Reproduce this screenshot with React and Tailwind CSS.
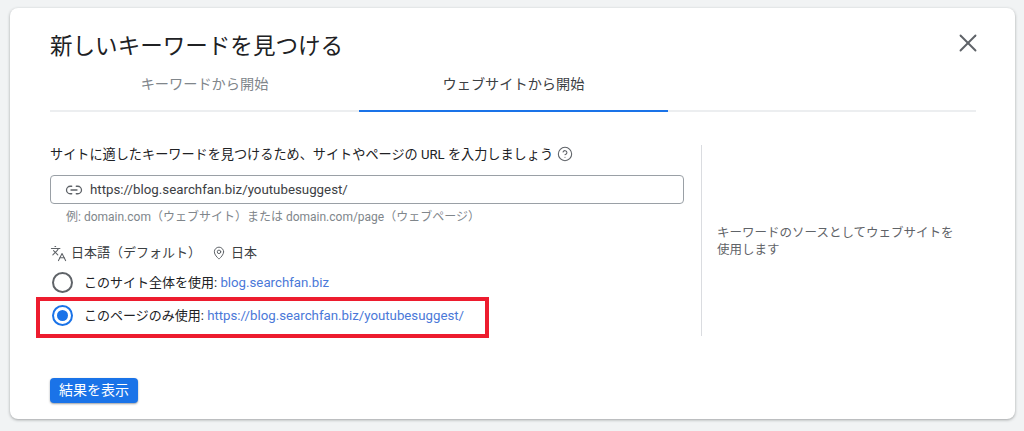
import { X, Link2, MapPin, Languages, CircleHelp } from 'lucide-react';

const font = { fontFamily: '"Roboto", "Noto Sans CJK JP", sans-serif' };

function Radio({ checked }) {
  return (
    <span className={`flex h-[21px] w-[21px] shrink-0 items-center justify-center rounded-full border-2 ${checked ? 'border-[#1a73e8]' : 'border-[#5f6368]'}`}>
      {checked && <span className="h-[11px] w-[11px] rounded-full bg-[#1a73e8]" />}
    </span>
  );
}

export default function App() {
  return (
    <div style={font} className="h-[431px] w-[1024px] overflow-hidden bg-[#f1f3f4] pl-[10px] pt-[8px]">
      <div className="relative h-[411px] w-[1005px] rounded-[8px] bg-white pl-[40px] pr-[39px] shadow-[0_1px_3px_rgba(60,64,67,0.45)]">
        {/* Header */}
        <div className="flex h-[60px] items-start justify-between">
          <h1 className="mt-[23px] text-[22.55px] font-normal leading-[32px] text-[#202124]">新しいキーワードを見つける</h1>
          <X className="-mr-[7px] mt-[20px] h-[30px] w-[30px] text-[#5f6368]" strokeWidth={1.5} />
        </div>

        {/* Tabs */}
        <div className="flex h-[44px] border-b-2 border-[#eceef0]">
          <div className="flex h-[44px] w-[309px] items-center justify-center pb-[10px] text-[14.2px] text-[#80868b]">キーワードから開始</div>
          <div className="flex h-[44px] w-[309px] items-center justify-center border-b-2 border-[#1a73e8] pb-[8px] text-[14.2px] text-[#3c4043]">ウェブサイトから開始</div>
        </div>

        {/* Body */}
        <div className="mt-[33px] flex h-[191px]">
          <div className="w-[652px] border-r border-[#dadce0] pr-[17px]">
            <div className="flex h-[20px] items-center gap-[4px] text-[13.15px] text-[#202124]">
              サイトに適したキーワードを見つけるため、サイトやページの URL を入力しましょう
              <CircleHelp className="mb-[2px] h-[16px] w-[16px] text-[#5f6368]" strokeWidth={1.6} />
            </div>
            <div className="mt-[10px] flex h-[29px] items-center gap-[7px] rounded-[4px] border border-[#9aa0a6] pl-[14px] text-[13.3px] text-[#3c4043]">
              <Link2 className="h-[18px] w-[18px] text-[#5f6368]" strokeWidth={1.7} />
              https://blog.searchfan.biz/youtubesuggest/
            </div>
            <div className="mt-[4px] h-[18px] pl-[16px] text-[12px] leading-[18px] text-[#80868b]">
              例: domain.com（ウェブサイト）または domain.com/page（ウェブページ）
            </div>
            <div className="mt-[17px] flex h-[20px] items-center text-[13px] text-[#3c4043]">
              <Languages className="mr-[4px] h-[17px] w-[17px] text-[#5f6368]" strokeWidth={1.5} />
              <span>日本語（デフォルト）</span>
              <MapPin className="ml-[11px] mr-[5px] h-[14px] w-[14px] text-[#5f6368]" strokeWidth={1.7} />
              <span>日本</span>
            </div>
            <div className="mt-[9px] flex h-[21px] items-center gap-[11px] pl-[2px] text-[13px] text-[#202124]">
              <Radio />
              <span>このサイト全体を使用: <span className="text-[13.25px] text-[#4a78d8]">blog.searchfan.biz</span></span>
            </div>
            <div className="mt-[12px] flex h-[21px] items-center gap-[11px] pl-[2px] text-[13px] text-[#202124]">
              <Radio checked />
              <span>このページのみ使用: <span className="text-[13.25px] text-[#4a78d8]">https://blog.searchfan.biz/youtubesuggest/</span></span>
            </div>
          </div>
          <div className="flex w-[273px] items-center pl-[15px] pr-[14px] text-[12.5px] leading-[17px] text-[#5f6368]">
            キーワードのソースとしてウェブサイトを使用します
          </div>
        </div>

        {/* Footer */}
        <button className="mt-[42px] h-[25px] w-[88px] rounded-[4px] bg-[#1a73e8] text-[14px] text-white shadow-[0_1px_2px_rgba(60,64,67,0.5)]">結果を表示</button>

        {/* Annotation */}
        <div className="absolute left-[26px] top-[289px] h-[41px] w-[453px] border-[4px] border-[#ed1c2e]" />
      </div>
    </div>
  );
}
